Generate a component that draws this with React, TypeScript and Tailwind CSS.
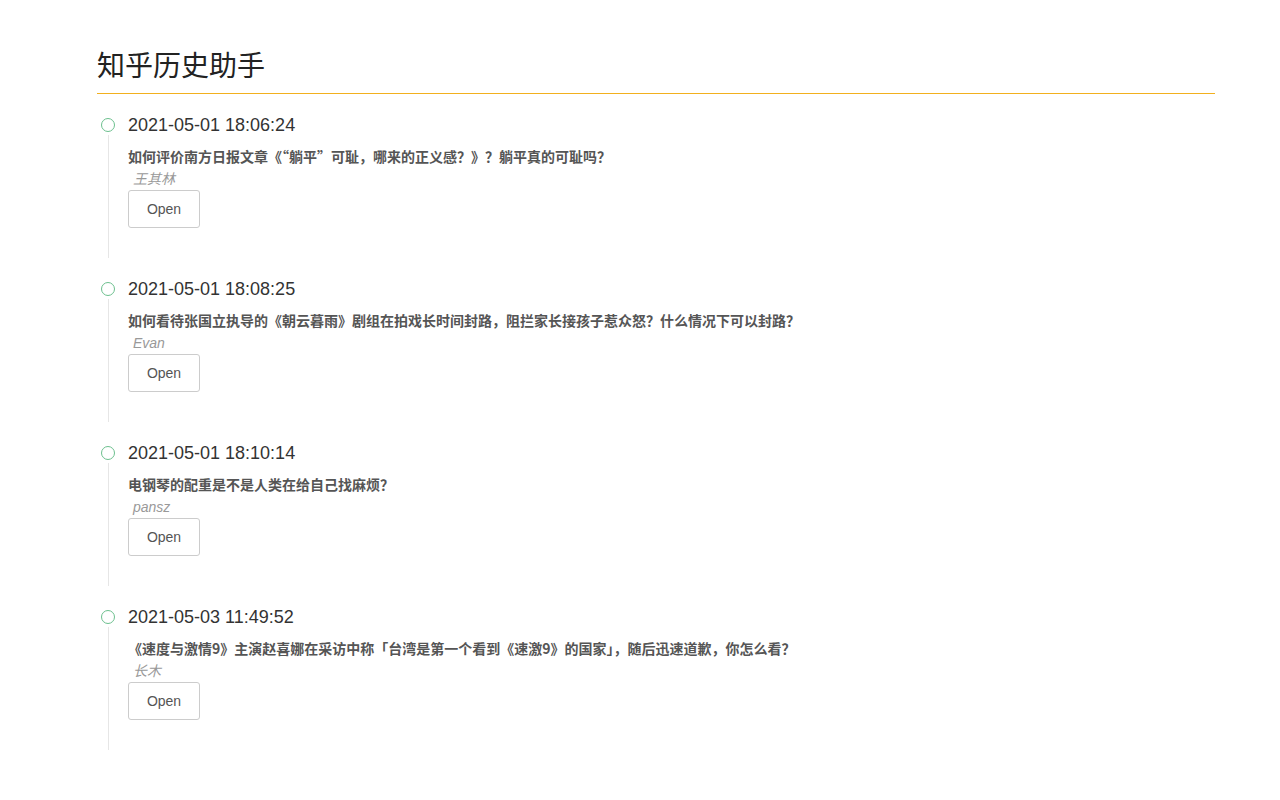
import React from 'react';

type Entry = {
  time: string;
  title: string;
  author: string;
};

const entries: Entry[] = [
  {
    time: '2021-05-01 18:06:24',
    title: '如何评价南方日报文章《“躺平”可耻，哪来的正义感？》？躺平真的可耻吗？',
    author: '王其林',
  },
  {
    time: '2021-05-01 18:08:25',
    title: '如何看待张国立执导的《朝云暮雨》剧组在拍戏长时间封路，阻拦家长接孩子惹众怒？什么情况下可以封路？',
    author: 'Evan',
  },
  {
    time: '2021-05-01 18:10:14',
    title: '电钢琴的配重是不是人类在给自己找麻烦？',
    author: 'pansz',
  },
  {
    time: '2021-05-03 11:49:52',
    title: '《速度与激情9》主演赵喜娜在采访中称「台湾是第一个看到《速激9》的国家」，随后迅速道歉，你怎么看？',
    author: '长木',
  },
];

const cjk = { fontFamily: '"Noto Sans CJK SC", "Liberation Sans", sans-serif' };

function TimelineItem({ entry }: { entry: Entry }) {
  return (
    <li className="flex">
      {/* dot + rail */}
      <div className="flex w-[22px] flex-col items-center">
        <div className="mt-[5px] h-[14px] w-[14px] shrink-0 rounded-full border-[1.5px] border-[#6cc08e]" />
        <div className="mt-[3px] w-px flex-1 bg-[#e6e6e6]" />
      </div>
      <div className="ml-[9px] flex flex-col items-start pb-[30px]">
        <div className="text-[18px] leading-6 text-[#333]">{entry.time}</div>
        <div className="mt-[9px] text-[14px] font-bold leading-5 text-[#555]" style={cjk}>
          {entry.title}
        </div>
        <div className="mt-[4px] pl-[5px] text-[14px] italic leading-[18px] text-[#999]">{entry.author}</div>
        <button className="mt-[2px] h-[38px] w-[72px] rounded-[3px] border border-[#cccccc] bg-white text-[14px] text-[#555]">
          Open
        </button>
      </div>
    </li>
  );
}

export default function App() {
  return (
    <div
      className="min-h-screen bg-white pl-[97px] pr-[65px] pt-[47px]"
      style={{ fontFamily: '"Liberation Sans", Arial, "Noto Sans CJK SC", sans-serif' }}
    >
      <h1 className="border-b border-[#f2b01e] pb-[6px] text-[28px] font-normal leading-[40px] text-[#222]">
        知乎历史助手
      </h1>
      <ul className="mt-[19px] flex flex-col gap-[19px]">
        {entries.map((e) => (
          <TimelineItem key={e.time} entry={e} />
        ))}
      </ul>
    </div>
  );
}
